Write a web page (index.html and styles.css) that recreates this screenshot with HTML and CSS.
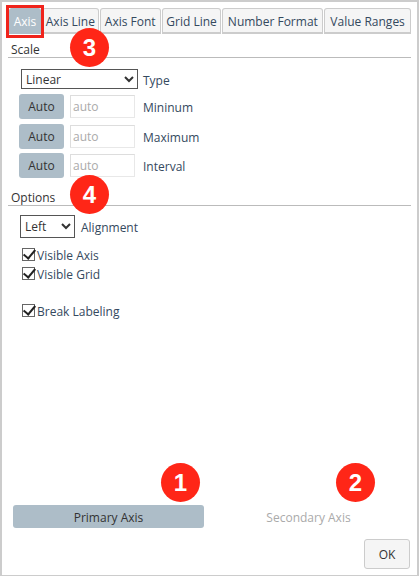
FILE: index.html
```html
<!DOCTYPE html>
<html lang="en">
<head>
<meta charset="utf-8">
<title>Axis settings</title>
<link rel="stylesheet" href="styles.css">
</head>
<body>
<div class="dialog">
  <nav class="tabs">
    <span class="tab tab-active">Axis</span>
    <span class="tab tab-line">Axis Line</span>
    <span class="tab tab-font">Axis Font</span>
    <span class="tab tab-grid">Grid Line</span>
    <span class="tab tab-number">Number Format</span>
    <span class="tab tab-ranges">Value Ranges</span>
  </nav>
  <main class="content">
    <h2 class="section-title">Scale</h2>
    <div class="scale-rows">
      <div class="row select-row">
        <select class="select select-type"><option>Linear</option></select>
        <span class="label">Type</span>
      </div>
      <div class="row auto-row">
        <button class="auto">Auto</button>
        <input class="value" placeholder="auto">
        <span class="label">Mininum</span>
      </div>
      <div class="row auto-row">
        <button class="auto">Auto</button>
        <input class="value" placeholder="auto">
        <span class="label">Maximum</span>
      </div>
      <div class="row auto-row">
        <button class="auto">Auto</button>
        <input class="value" placeholder="auto">
        <span class="label">Interval</span>
      </div>
    </div>
    <h2 class="section-title options-title">Options</h2>
    <div class="row align-row">
      <select class="select select-align"><option>Left</option></select>
      <span class="label">Alignment</span>
    </div>
    <label class="check"><input type="checkbox" checked><span>Visible Axis</span></label>
    <label class="check"><input type="checkbox" checked><span>Visible Grid</span></label>
    <label class="check check-break"><input type="checkbox" checked><span>Break Labeling</span></label>
  </main>
  <div class="axis-switch">
    <button class="axis axis-primary">Primary Axis</button>
    <button class="axis axis-secondary">Secondary Axis</button>
  </div>
  <footer class="footer"><button class="ok">OK</button></footer>
  <span class="highlight"></span>
  <span class="badge badge-1">1</span>
  <span class="badge badge-2">2</span>
  <span class="badge badge-3">3</span>
  <span class="badge badge-4">4</span>
</div>
</body>
</html>
```
FILE: styles.css
```css
* { box-sizing: border-box; }
html, body { margin: 0; padding: 0; background: #fff; }
body {
  width: 419px;
  height: 576px;
  overflow: hidden;
  font-family: "Open Sans", "Noto Sans", sans-serif;
  font-size: 12px;
  color: #333;
}
.dialog {
  position: relative;
  width: 419px;
  height: 576px;
  border: solid #ccc;
  border-width: 2px 2px 1px 2px;
  padding: 6px 6px 0 7px;
  display: flex;
  flex-direction: column;
}
.tabs { display: flex; height: 26px; gap: 1px; }
.tab {
  height: 26px;
  line-height: 25px;
  text-align: center;
  background: #f5f5f5;
  border: 1px solid #ccc;
  border-bottom-width: 2px;
  border-radius: 3px 3px 0 0;
  white-space: nowrap;
  color: #34495e;
}
.tab-active { width: 32px; background: #adbdc8; color: #fff; border-color: #adbdc8; }
.tab-line { width: 57px; }
.tab-font { width: 61px; }
.tab-grid { width: 60px; }
.tab-number { width: 101px; }
.tab-ranges { width: 87px; }
.content { height: 505px; padding-top: 7px; flex: none; margin-left: -1px; }
.section-title {
  margin: 0;
  height: 17px;
  font-size: 12px;
  font-weight: 400;
  line-height: 18px;
  padding-left: 3px;
  border-bottom: 1px solid #bbb;
  width: 403px;
}
.scale-rows { display: flex; flex-direction: column; }
.row { display: flex; align-items: center; }
.select-row { margin: 11px 0 0 13px; height: 20px; }
.select {
  appearance: auto;
  font: inherit;
  color: #333;
  background: #fff;
  border: 1px solid #555;
  border-radius: 0;
  padding: 0;
}
.select-type { width: 117px; height: 20px; margin-right: 5px; }
.select-align { width: 55px; height: 23px; margin-right: 6px; }
.auto-row { margin: 5px 0 0 11px; height: 25px; }
.auto-row + .auto-row { margin-top: 5px; }
.auto-row + .auto-row + .auto-row { margin-top: 4px; }
.auto {
  width: 45px;
  height: 25px;
  padding: 0;
  font: inherit;
  color: #333;
  background: #adbdc8;
  border: 0;
  border-radius: 3px;
}
.value {
  width: 65px;
  height: 23px;
  margin-left: 6px;
  margin-right: 8px;
  padding: 0 2px;
  font: inherit;
  border: 1px solid #e8e8e8;
  border-top-color: #ddd;
  border-left-color: #ddd;
  outline: 0;
}
.value::placeholder { color: #aaa; opacity: 1; }
.label { color: #34495e; white-space: nowrap; position: relative; top: 1px; }
.options-title { margin-top: 11px; }
.align-row { margin: 9px 0 0 12px; height: 23px; }
.check {
  display: flex;
  align-items: center;
  height: 19px;
  margin-left: 14px;
  color: #34495e;
}
.check input {
  appearance: none;
  position: relative;
  width: 13px;
  height: 13px;
  margin: -2px 2px 0 0;
  background: #fff;
  border: 1px solid #666;
  flex: none;
}
.check input::after {
  content: "";
  position: absolute;
  left: 3px;
  top: -2px;
  width: 5px;
  height: 10px;
  border: solid #222;
  border-width: 0 2px 2px 0;
  transform: rotate(40deg);
}
.align-row + .check { margin-top: 8px; }
.check-break { margin-top: 18px; }
.axis-switch { display: flex; position: absolute; left: 11px; top: 503px; }
.axis {
  width: 191px;
  height: 23px;
  padding: 2px 0 0;
  border: 0;
  border-radius: 3px;
  font: inherit;
  background: transparent;
}
.axis-primary { background: #adbdc8; color: #333; }
.axis-secondary { color: #aaa; margin-left: 9px; }
.footer { display: flex; justify-content: flex-end; }
.ok {
  width: 46px;
  height: 30px;
  margin-right: 1px;
  font: inherit;
  color: #333;
  background: #f5f5f5;
  border: 1px solid #ccc;
  border-radius: 3px;
  padding: 0;
}
.highlight {
  position: absolute;
  left: 4px;
  top: 3px;
  width: 38px;
  height: 33px;
  border: 3px solid #f0241c;
}
.badge {
  position: absolute;
  width: 39px;
  height: 39px;
  border-radius: 50%;
  background: #ff2617;
  color: #fff;
  font-family: "Liberation Sans", Arial, sans-serif;
  font-weight: 700;
  font-size: 24px;
  line-height: 39px;
  text-align: center;
}
.badge-1 { left: 159px; top: 461px; }
.badge-2 { left: 334px; top: 461px; }
.badge-3 { left: 68px; top: 26px; }
.badge-4 { left: 68px; top: 173px; }
```
